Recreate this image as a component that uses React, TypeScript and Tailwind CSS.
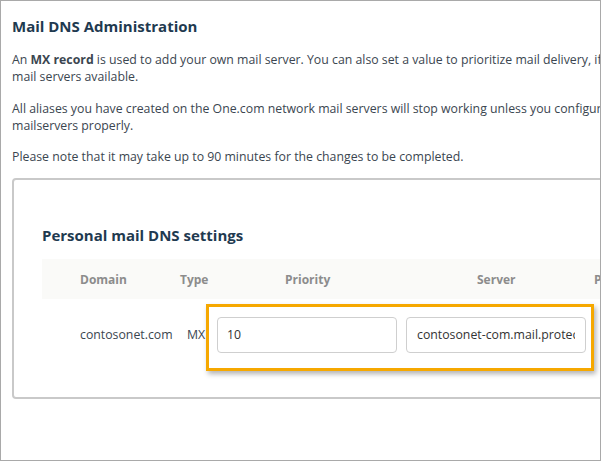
export default function App() {
  return (
    <div className="w-[601px] h-[461px] overflow-hidden bg-white border border-[#a9a9a9] font-['Open_Sans',sans-serif] text-[12.3px] text-[#3b4650]">
      <div className="pl-[11px] pt-[14px]">
        <h1 className="text-[15px] font-bold text-[#1f3a50] leading-[22px]">Mail DNS Administration</h1>
        <p className="mt-[14px] leading-[17px] whitespace-nowrap">
          An <b>MX record</b> is used to add your own mail server. You can also set a value to prioritize mail delivery, if you have multiple
          <br />
          mail servers available.
        </p>
        <p className="mt-[15px] leading-[17px] whitespace-nowrap">
          All aliases you have created on the One.com network mail servers will stop working unless you configure your
          <br />
          mailservers properly.
        </p>
        <p className="mt-[14px] leading-[17px] whitespace-nowrap">
          Please note that it may take up to 90 minutes for the changes to be completed.
        </p>
      </div>

      <div className="ml-[11px] mt-[13px] w-[620px] h-[221px] border-2 border-[#c9c9c9] rounded-[4px] pl-[28px] pt-[44px]">
        <h2 className="text-[15px] font-bold text-[#1f3a50] leading-[22px]">Personal mail DNS settings</h2>
        <div className="relative mt-[13px]">
          <div className="flex h-[40px] items-center bg-[#fafaf8] pl-[38px] pt-[1px] font-bold text-[#8c8c8c] text-[12px] whitespace-nowrap">
            <div className="w-[100px] shrink-0">Domain</div>
            <div className="w-[105px] shrink-0">Type</div>
            <div className="w-[192px] shrink-0">Priority</div>
            <div className="w-[117px] shrink-0">Server</div>
            <div className="shrink-0">Port</div>
          </div>
          <div className="flex items-center pt-[18px] pl-[38px] whitespace-nowrap">
            <div className="w-[107px] shrink-0">contosonet.com</div>
            <div className="w-[30px] shrink-0">MX</div>
            <div className="shrink-0 w-[180px] h-[36px] border border-[#cfcfcf] rounded-[4px] flex items-center px-[9px] text-[#333]">10</div>
            <div className="shrink-0 ml-[9px] w-[180px] h-[36px] border border-[#cfcfcf] rounded-[4px] flex items-center px-[10px] text-[#333]">
              <div className="w-full overflow-hidden">contosonet-com.mail.protection.outlook.com</div>
            </div>
          </div>
          <div className="absolute left-[164px] top-[45px] w-[388px] h-[67px] border-[3px] border-[#f6a800] shadow-[2px_3px_5px_rgba(0,0,0,0.3)]" />
        </div>
      </div>
    </div>
  );
}
